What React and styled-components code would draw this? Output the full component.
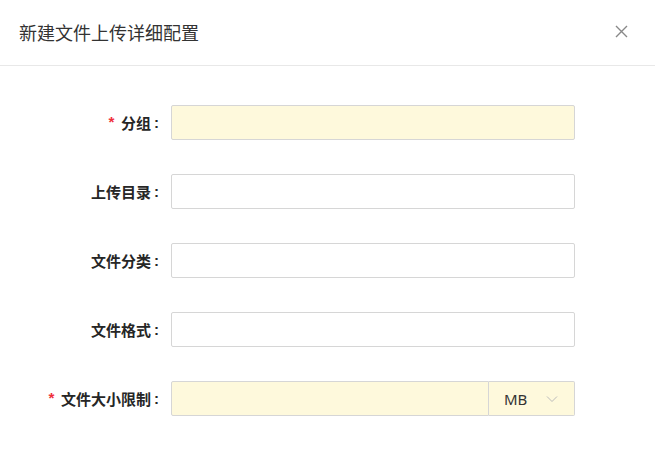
import React from "react";
import styled, { createGlobalStyle } from "styled-components";

const Global = createGlobalStyle`
  html, body { margin: 0; padding: 0; background: #fff; }
  body { font-family: "Noto Sans CJK SC", "Noto Sans", sans-serif; }
`;

const Dialog = styled.div`
  width: 655px;
  height: 450px;
  background: #fff;
  display: flex;
  flex-direction: column;
`;

const Header = styled.div`
  height: 66px;
  box-sizing: border-box;
  border-bottom: 1px solid #e8e8e8;
  display: flex;
  align-items: center;
  justify-content: space-between;
  padding: 0 19px 2px 19px;
`;

const Title = styled.div`
  font-size: 18px;
  color: #333;
  font-weight: 400;
`;

const Close = styled.button`
  border: none;
  background: none;
  padding: 0;
  width: 16px;
  height: 16px;
  display: flex;
  align-items: center;
  justify-content: center;
  cursor: pointer;
  margin-right: 7px;
`;

const Body = styled.div`
  padding-top: 39px;
  display: flex;
  flex-direction: column;
  gap: 34px;
`;

const Row = styled.div`
  display: grid;
  grid-template-columns: 171px 404px;
  align-items: center;
  height: 35px;
`;

const Label = styled.label`
  display: flex;
  justify-content: flex-end;
  align-items: center;
  font-size: 15px;
  font-weight: bold;
  color: #262626;
  padding-right: 12px;
`;

const Star = styled.span`
  color: #ef2f3a;
  font-weight: bold;
  font-family: "Liberation Mono", monospace;
  font-size: 15px;
  margin-right: 5px;
  margin-top: 3px;
`;

const Colon = styled.span`
  margin-left: 3px;
  font-family: "Liberation Sans", sans-serif;
`;

const Input = styled.input`
  box-sizing: border-box;
  height: 35px;
  width: 100%;
  border: 1px solid #d6d6d6;
  border-radius: 2px;
  background: ${(p) => (p.$required ? "#fef9dc" : "#fff")};
  outline: none;
  padding: 0 10px;
  font-size: 14px;
  font-family: inherit;
`;

const Group = styled.div`
  display: flex;
  height: 35px;
`;

const GroupInput = styled(Input)`
  flex: 1;
  border-radius: 2px 0 0 2px;
`;

const Select = styled.div`
  box-sizing: border-box;
  width: 86px;
  height: 35px;
  border: 1px solid #d6d6d6;
  border-left: none;
  border-radius: 0 2px 2px 0;
  background: #fef9dc;
  display: flex;
  align-items: center;
  padding-left: 15px;
  padding-right: 16px;
  justify-content: space-between;
  font-family: "Noto Sans", "Liberation Sans", sans-serif;
  font-size: 15px;
  color: #333;
`;

const fields = [
  { label: "分组", required: true },
  { label: "上传目录" },
  { label: "文件分类" },
  { label: "文件格式" },
];

export default function App() {
  return (
    <Dialog>
      <Global />
      <Header>
        <Title>新建文件上传详细配置</Title>
        <Close aria-label="close">
          <svg width="13" height="13" viewBox="0 0 13 13">
            <path d="M1 1L12 12M12 1L1 12" stroke="#888" strokeWidth="1.4" />
          </svg>
        </Close>
      </Header>
      <Body>
        {fields.map((f) => (
          <Row key={f.label}>
            <Label>
              {f.required && <Star>*</Star>}
              {f.label}
              <Colon>:</Colon>
            </Label>
            <Input $required={f.required} />
          </Row>
        ))}
        <Row>
          <Label>
            <Star>*</Star>
            文件大小限制
            <Colon>:</Colon>
          </Label>
          <Group>
            <GroupInput $required />
            <Select>
              <span>MB</span>
              <svg width="12" height="8" viewBox="0 0 12 8">
                <path d="M1 1.5L6 6.5L11 1.5" fill="none" stroke="#bbb" strokeWidth="1" />
              </svg>
            </Select>
          </Group>
        </Row>
      </Body>
    </Dialog>
  );
}
